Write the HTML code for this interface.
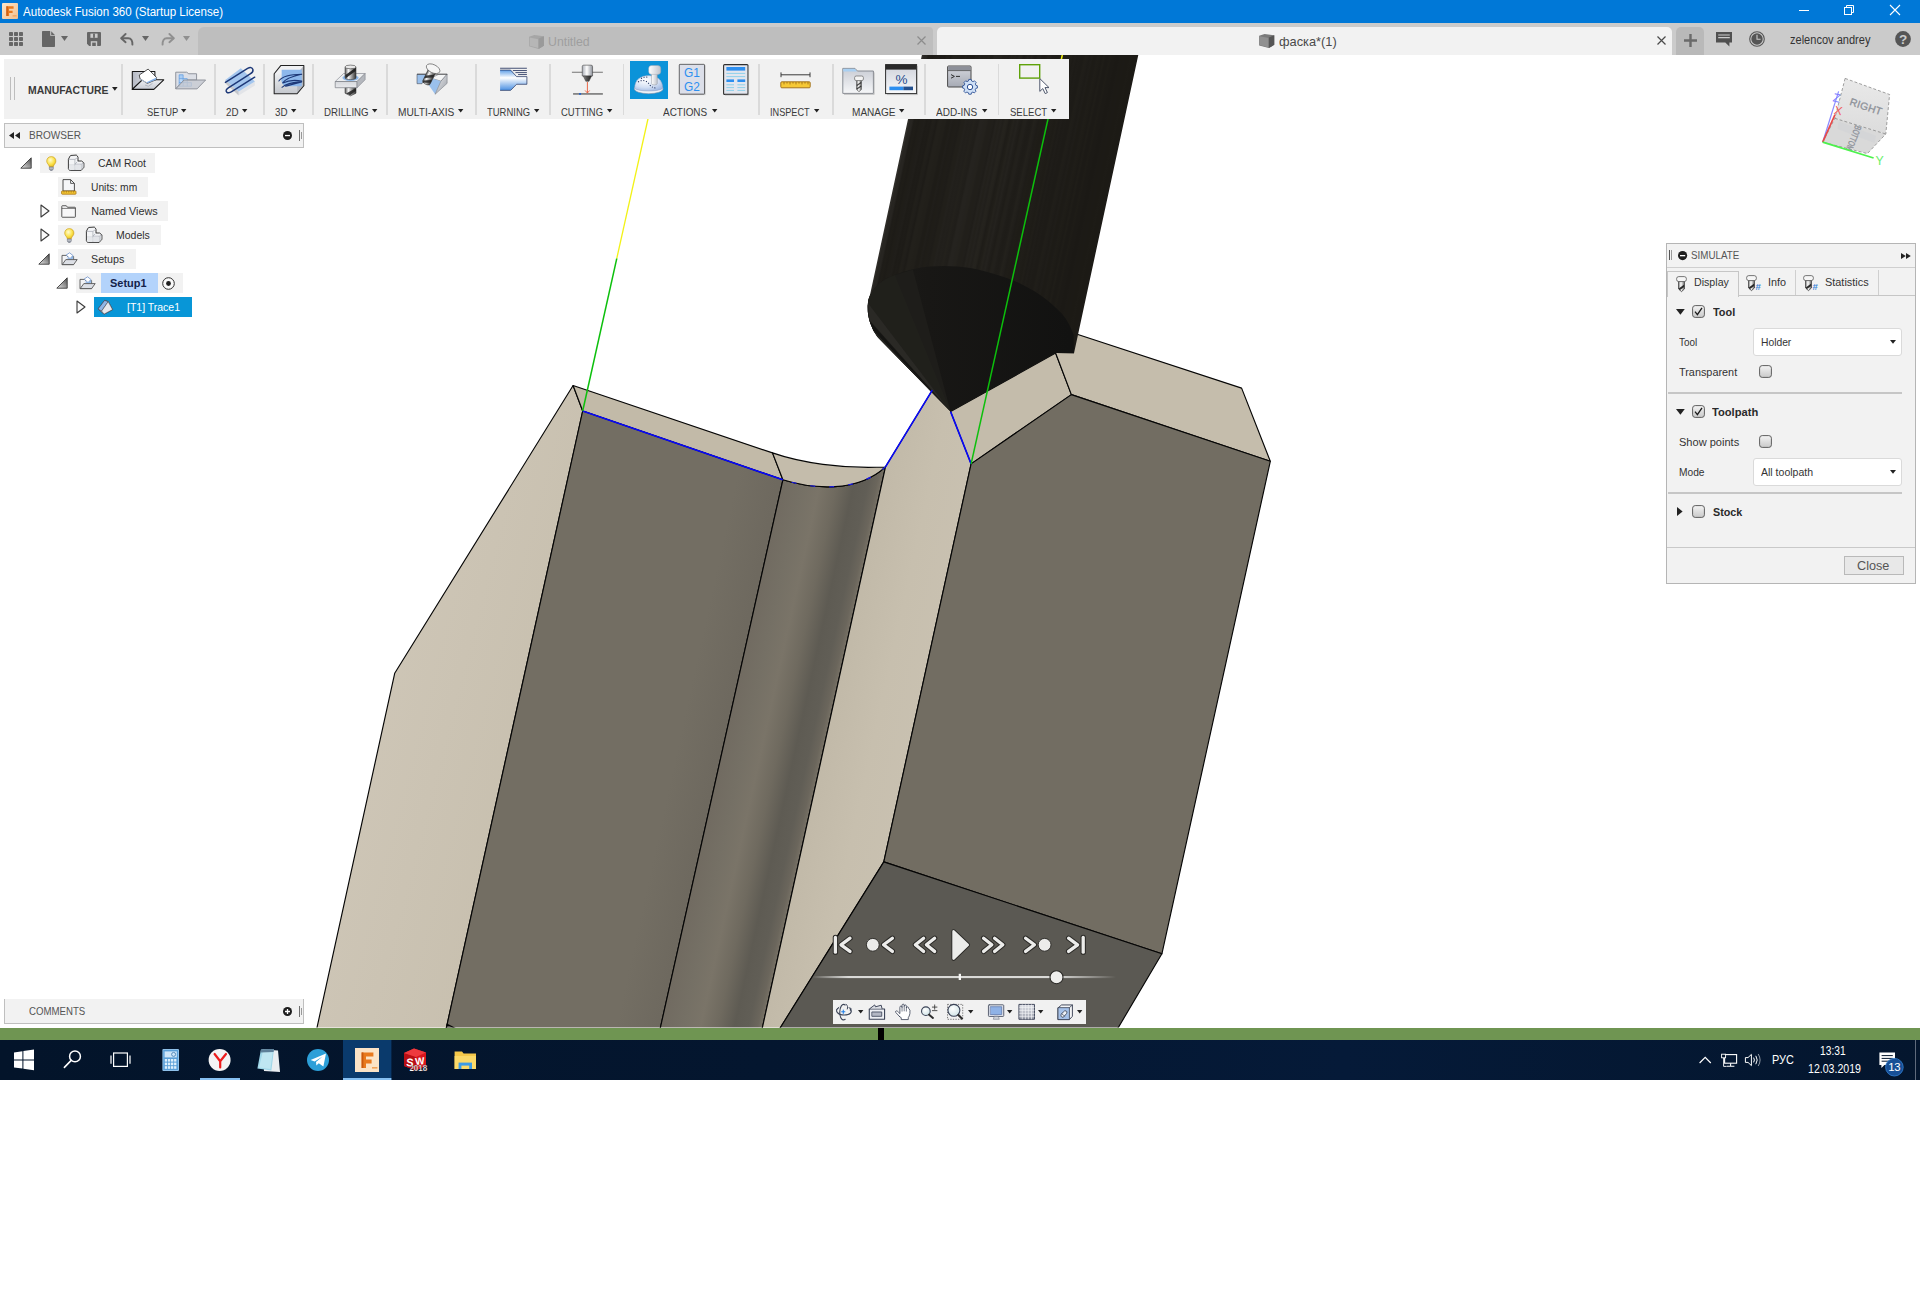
<!DOCTYPE html>
<html lang="en">
<head>
<meta charset="utf-8">
<title>Autodesk Fusion 360 (Startup License)</title>
<style>
*{box-sizing:border-box;margin:0;padding:0}
html,body{width:1920px;height:1291px;overflow:hidden;background:#fff}
body{position:relative;font-family:"Liberation Sans",sans-serif;font-size:11px;color:#333}
.a{position:absolute}
.t{position:absolute;white-space:nowrap}
svg{position:absolute;overflow:visible}
</style>
</head>
<body>
<!-- sec_viewport -->
<svg style="left:0;top:0" width="1920" height="1291" viewBox="0 0 1920 1291"><defs>
<linearGradient id="lgA" gradientUnits="userSpaceOnUse" x1="330" y1="700" x2="560" y2="760"><stop offset="0" stop-color="#cfc7b8"/><stop offset="1" stop-color="#c7bfae"/></linearGradient>
<linearGradient id="lgM" gradientUnits="userSpaceOnUse" x1="830" y1="700" x2="930" y2="722"><stop offset="0" stop-color="#c1b9a8"/><stop offset=".5" stop-color="#c7bfae"/><stop offset="1" stop-color="#c9c1b1"/></linearGradient>
<linearGradient id="lgG" gradientUnits="userSpaceOnUse" x1="782.9" y1="479.8" x2="878" y2="500.7">
<stop offset="0" stop-color="#716b61"/><stop offset=".2" stop-color="#757065"/><stop offset=".38" stop-color="#7a7468"/><stop offset=".55" stop-color="#6f6a5f"/><stop offset=".72" stop-color="#5e5b53"/><stop offset=".86" stop-color="#615e56"/><stop offset=".95" stop-color="#6b665c"/><stop offset="1" stop-color="#787266"/></linearGradient>
<linearGradient id="lgL" gradientUnits="userSpaceOnUse" x1="520" y1="700" x2="720" y2="744"><stop offset="0" stop-color="#736e63"/><stop offset=".8" stop-color="#736e63"/><stop offset="1" stop-color="#6e695f"/></linearGradient>
<linearGradient id="lgT" gradientUnits="userSpaceOnUse" x1="893" y1="180" x2="1110" y2="227.6"><stop offset="0.000" stop-color="#33312d"/><stop offset="0.009" stop-color="#33312d"/><stop offset="0.018" stop-color="#272521"/><stop offset="0.027" stop-color="#272521"/><stop offset="0.036" stop-color="#1e1c18"/><stop offset="0.045" stop-color="#1f1d18"/><stop offset="0.055" stop-color="#1d1b17"/><stop offset="0.064" stop-color="#1f1d18"/><stop offset="0.073" stop-color="#1f1d19"/><stop offset="0.082" stop-color="#201e1a"/><stop offset="0.091" stop-color="#1d1b17"/><stop offset="0.100" stop-color="#1e1c18"/><stop offset="0.109" stop-color="#1d1b17"/><stop offset="0.118" stop-color="#211f1a"/><stop offset="0.127" stop-color="#201e1a"/><stop offset="0.136" stop-color="#1d1b17"/><stop offset="0.145" stop-color="#22201b"/><stop offset="0.155" stop-color="#22201b"/><stop offset="0.164" stop-color="#211f1a"/><stop offset="0.173" stop-color="#211f1a"/><stop offset="0.182" stop-color="#1e1c18"/><stop offset="0.191" stop-color="#1e1c17"/><stop offset="0.200" stop-color="#201e1a"/><stop offset="0.209" stop-color="#1e1c18"/><stop offset="0.218" stop-color="#1f1d18"/><stop offset="0.227" stop-color="#1f1d19"/><stop offset="0.236" stop-color="#1e1c18"/><stop offset="0.245" stop-color="#211f1a"/><stop offset="0.255" stop-color="#211f1a"/><stop offset="0.264" stop-color="#23211d"/><stop offset="0.273" stop-color="#211f1b"/><stop offset="0.282" stop-color="#22201c"/><stop offset="0.291" stop-color="#211f1b"/><stop offset="0.300" stop-color="#23211c"/><stop offset="0.309" stop-color="#211f1b"/><stop offset="0.318" stop-color="#201e1a"/><stop offset="0.327" stop-color="#25231f"/><stop offset="0.336" stop-color="#25231f"/><stop offset="0.345" stop-color="#24221e"/><stop offset="0.355" stop-color="#24221d"/><stop offset="0.364" stop-color="#211f1b"/><stop offset="0.373" stop-color="#211f1a"/><stop offset="0.382" stop-color="#211f1b"/><stop offset="0.391" stop-color="#1f1d19"/><stop offset="0.400" stop-color="#24221e"/><stop offset="0.409" stop-color="#22201b"/><stop offset="0.418" stop-color="#24221e"/><stop offset="0.427" stop-color="#211f1b"/><stop offset="0.436" stop-color="#25231e"/><stop offset="0.445" stop-color="#24221d"/><stop offset="0.455" stop-color="#1e1c18"/><stop offset="0.464" stop-color="#201e19"/><stop offset="0.473" stop-color="#24221d"/><stop offset="0.482" stop-color="#211f1b"/><stop offset="0.491" stop-color="#24221e"/><stop offset="0.500" stop-color="#201e1a"/><stop offset="0.509" stop-color="#1e1c18"/><stop offset="0.518" stop-color="#22201b"/><stop offset="0.527" stop-color="#22201c"/><stop offset="0.536" stop-color="#1f1d19"/><stop offset="0.545" stop-color="#1e1c18"/><stop offset="0.555" stop-color="#1f1d19"/><stop offset="0.564" stop-color="#23211c"/><stop offset="0.573" stop-color="#211f1b"/><stop offset="0.582" stop-color="#1e1c18"/><stop offset="0.591" stop-color="#1f1d18"/><stop offset="0.600" stop-color="#1e1c17"/><stop offset="0.609" stop-color="#1e1c17"/><stop offset="0.618" stop-color="#211f1a"/><stop offset="0.627" stop-color="#1e1c17"/><stop offset="0.636" stop-color="#201e19"/><stop offset="0.645" stop-color="#1f1d18"/><stop offset="0.655" stop-color="#1e1c17"/><stop offset="0.664" stop-color="#201e19"/><stop offset="0.673" stop-color="#1d1b17"/><stop offset="0.682" stop-color="#1f1d19"/><stop offset="0.691" stop-color="#1d1b17"/><stop offset="0.700" stop-color="#1e1c18"/><stop offset="0.709" stop-color="#1d1b17"/><stop offset="0.718" stop-color="#1d1b17"/><stop offset="0.727" stop-color="#201e19"/><stop offset="0.736" stop-color="#1f1d19"/><stop offset="0.745" stop-color="#1d1b17"/><stop offset="0.755" stop-color="#1f1d19"/><stop offset="0.764" stop-color="#1d1b16"/><stop offset="0.773" stop-color="#1d1b17"/><stop offset="0.782" stop-color="#1f1d18"/><stop offset="0.791" stop-color="#1e1c17"/><stop offset="0.800" stop-color="#1c1a16"/><stop offset="0.809" stop-color="#1f1d18"/><stop offset="0.818" stop-color="#1c1a16"/><stop offset="0.827" stop-color="#1c1a16"/><stop offset="0.836" stop-color="#1e1c17"/><stop offset="0.845" stop-color="#1c1a16"/><stop offset="0.855" stop-color="#1c1a16"/><stop offset="0.864" stop-color="#1b1915"/><stop offset="0.873" stop-color="#1b1915"/><stop offset="0.882" stop-color="#1c1a16"/><stop offset="0.891" stop-color="#1c1a15"/><stop offset="0.900" stop-color="#1c1a16"/><stop offset="0.909" stop-color="#1c1a15"/><stop offset="0.918" stop-color="#1c1a15"/><stop offset="0.927" stop-color="#1d1b16"/><stop offset="0.936" stop-color="#1c1a15"/><stop offset="0.945" stop-color="#1c1a15"/><stop offset="0.955" stop-color="#1c1a16"/><stop offset="0.964" stop-color="#1b1915"/><stop offset="0.973" stop-color="#1b1915"/><stop offset="0.982" stop-color="#1c1a16"/><stop offset="0.991" stop-color="#1c1a16"/><stop offset="1.000" stop-color="#1b1915"/></linearGradient>
<linearGradient id="lgC" gradientUnits="userSpaceOnUse" x1="868" y1="330" x2="1070" y2="330"><stop offset="0" stop-color="#1c1b19"/><stop offset=".3" stop-color="#181715"/><stop offset="1" stop-color="#121211"/></linearGradient>
<clipPath id="vp"><rect x="0" y="55" width="1920" height="972.6"/></clipPath>
</defs>
<g clip-path="url(#vp)">
<polygon points="573.1,385.5 394.7,673.3 315.6,1034.0 445.0,1034.0 582.7,411.0" fill="url(#lgA)" stroke="#050505" stroke-width="1.15" stroke-linejoin="round"/>
<polygon points="573.1,385.5 772.5,452.9 782.9,479.8 582.7,411.0" fill="#c2baa8" stroke="#050505" stroke-width="1.15" stroke-linejoin="round"/>
<polygon points="582.7,411.0 782.9,479.8 659.0,1034.0 445.0,1034.0" fill="url(#lgL)" stroke="#050505" stroke-width="1.15" stroke-linejoin="round"/>
<path d="M782.9,479.8 C 800,485.2 818,487.6 835,486.6 C 856,485.3 873,478.2 885.5,466.8 L760.99514978602,1034.0 L658.9688207374954,1034.0 Z" fill="url(#lgG)" stroke="#050505" stroke-width="1.15" stroke-linejoin="round"/>
<path d="M772.5,452.9 C 800,462.5 842,469.2 885.2,467 L885.5,466.8 C 873,478.2 856,485.3 835,486.6 C 818,487.6 800,485.2 782.9,479.8 Z" fill="#c4bcab" stroke="#050505" stroke-width="1.15" stroke-linejoin="round"/>
<polygon points="885.5,466.8 945.0,369.5 1000.0,380.0 971.1,463.9 883.8,861.9 776.4,1034.0 761.0,1034.0" fill="url(#lgM)" stroke="#050505" stroke-width="1.15" stroke-linejoin="round"/>
<polygon points="950.6,411.6 971.1,463.9 1071.4,394.6 1055.6,353.0" fill="#c4bcab" stroke="#050505" stroke-width="1.15" stroke-linejoin="round"/>
<polygon points="1055.6,353.0 1060.0,330.0 1076.4,334.0 1241.6,388.1 1270.3,461.3 1071.4,394.6" fill="#c5bdac" stroke="#050505" stroke-width="1.15" stroke-linejoin="round"/>
<polygon points="971.1,463.9 1071.4,394.6 1270.3,461.3 1161.9,953.8 883.8,861.9" fill="#726d62" stroke="#050505" stroke-width="1.15" stroke-linejoin="round"/>
<polygon points="883.8,861.9 1161.9,953.8 1114.5,1034.0 776.4,1034.0" fill="#5b5953" stroke="#050505" stroke-width="1.15" stroke-linejoin="round"/>
<polygon points="447.2,1024.2 466.0,1034.0 445.0,1034.0" fill="#5b5953" stroke="#050505" stroke-width="1.15" stroke-linejoin="round"/>
<path d="M921.9,55 L867.7,305.5 Q867.4,316 870.5,323.7 Q873,331 878.1,337.6 L950.6,411.6 L1055.6,353.0 L1074.0,353.2 L1138.3,55 Z" fill="url(#lgT)"/>
<path d="M868.2,300 C 872,288 882,279 894.9,274.9 C 906,270.5 918,267.5 929.7,266.5 C 939,265.7 949,265.8 957.6,266.5 C 967,267.3 977,269 985.5,271.4 C 995,274 1005,277 1013.4,280.4 C 1023,284.5 1033,290 1041.3,295.8 C 1049,301.5 1056,307.5 1062.2,313.9 C 1067,319.5 1071,327 1073.6,334.8 L1074.0,353.2 L1055.6,353.0 L950.6,411.6 L878.1,337.6 Q873,331 870.5,323.7 Q867.4,316 867.7,305.5 Z" fill="url(#lgC)"/>
<path d="M868.2,300 C 872,288 882,279 894.9,274.9 L913,269.6 L950.6,411.6 L878.1,337.6 Q873,331 870.5,323.7 Q867.4,316 867.7,305.5 Z" fill="#1e1d1a"/>
<path d="M868,303 L950.6,411.6 L869.4,320 Z" fill="#2a2925"/><path d="M869.6,321 L950.6,411.6 L873,330 Z" fill="#141412"/><path d="M873,330 L950.6,411.6 L877,336.4 Z" fill="#262521"/>
<path d="M868.2,300 C 872,288 882,279 894.9,274.9 L950.6,411.6 L868,303 Z" fill="#23221e" opacity=".55"/>
<path d="M582.7,411.0 L782.9,479.8" stroke="#0808f8" stroke-width="1.6" fill="none"/>
<path d="M782.9,479.8 C 800,485.2 818,487.6 835,486.6 C 856,485.3 873,478.2 885.5,466.8" stroke="#1a1ae8" stroke-width="1.2" fill="none" stroke-dasharray="5 14" stroke-dashoffset="-9"/>
<path d="M885.5,466.8 L932.3,390.2" stroke="#0808f8" stroke-width="1.6" fill="none"/>
<path d="M950.6,411.6 L971.1,463.9" stroke="#0808f8" stroke-width="1.6" fill="none"/>
<path d="M582.7,411.0 L616.8,258.3" stroke="#0cc00c" stroke-width="1.5" fill="none"/>
<path d="M616.8,258.3 L652.2,100" stroke="#f2f216" stroke-width="1.3" fill="none"/>
<path d="M971.1,463.9 L1061.4,59" stroke="#0cc00c" stroke-width="1.5" fill="none"/>
<path d="M1061.3,59.5 L1062.3,55" stroke="#f2f216" stroke-width="1.5" fill="none"/>
</g>
</svg>
<!-- sec_top -->
<div class="a" style="left:0px;top:0px;width:1920px;height:23px;background:#0078d7;"></div>
<svg style="left:2px;top:3px" width="16" height="16" viewBox="0 0 16 16" ><defs><linearGradient id="fg" x1="0" y1="0" x2="1" y2="1"><stop offset="0" stop-color="#fbe6cb"/><stop offset="1" stop-color="#f2c08e"/></linearGradient></defs>
<rect width="16" height="16" rx="1" fill="url(#fg)"/>
<path d="M4.4 13V3.2h7.2v2.5H7.1v2.1h3.5v2.3H7.1V13z" fill="#e8791d"/><path d="M4.4 13V3.2h1.3V13z" fill="#c9580e"/><rect x="10.6" y="12.2" width="4" height="1.3" fill="#f0a35a"/></svg>
<div class="t" style="left:23.00px;top:5.54px;font-size:12px;line-height:12px;color:#fff;transform:scaleX(0.9641);transform-origin:0 0;">Autodesk Fusion 360 (Startup License)</div>
<svg style="left:1799px;top:10px" width="10" height="1" viewBox="0 0 10 1" ><rect width="10" height="1" fill="#fff"/></svg>
<svg style="left:1844px;top:5px" width="10" height="10" viewBox="0 0 10 10" fill="none" stroke="#fff" stroke-width="1"><rect x=".5" y="2.5" width="7" height="7"/><path d="M2.5 2.5V.5H9.5V7.5H7.5"/></svg>
<svg style="left:1890px;top:5px" width="10" height="10" viewBox="0 0 10 10" fill="none" stroke="#fff" stroke-width="1.1"><path d="M0 0L10 10M10 0L0 10"/></svg>
<div class="a" style="left:0px;top:23px;width:1920px;height:32px;background:#cbcbcb;"></div>
<svg style="left:9px;top:32px" width="14" height="14" viewBox="0 0 14 14" fill="#666"><rect x="0" y="0" width="4" height="4" rx=".7"/><rect x="0" y="5" width="4" height="4" rx=".7"/><rect x="0" y="10" width="4" height="4" rx=".7"/><rect x="5" y="0" width="4" height="4" rx=".7"/><rect x="5" y="5" width="4" height="4" rx=".7"/><rect x="5" y="10" width="4" height="4" rx=".7"/><rect x="10" y="0" width="4" height="4" rx=".7"/><rect x="10" y="5" width="4" height="4" rx=".7"/><rect x="10" y="10" width="4" height="4" rx=".7"/></svg>
<svg style="left:42px;top:31px" width="13" height="16" viewBox="0 0 13 16" ><path d="M.8 0H8.2V4.8H13V15.2a.8.8 0 0 1-.8.8H.8a.8.8 0 0 1-.8-.8V.8A.8.8 0 0 1 .8 0z" fill="#666"/><path d="M9.2 .2L12.9 3.9H9.2z" fill="#666"/></svg>
<svg style="left:61px;top:36px" width="7" height="5" viewBox="0 0 7 5" ><path d="M0 0H7L3.5 5z" fill="#666"/></svg>
<svg style="left:87px;top:32px" width="14" height="14" viewBox="0 0 14 14" ><path d="M1 0H13a1 1 0 0 1 1 1V13a1 1 0 0 1-1 1H2.2L0 11.8V1a1 1 0 0 1 1-1z" fill="#666"/><rect x="3.4" y="1.6" width="7.2" height="4.2" fill="#cbcbcb"/><rect x="6.1" y="1.6" width="1.8" height="4.2" fill="#666"/><rect x="3.8" y="9.2" width="6.4" height="4.8" fill="#cbcbcb"/><rect x="5.2" y="10.6" width="3.6" height="3.4" fill="#666"/></svg>
<svg style="left:120px;top:33px" width="14" height="13" viewBox="0 0 14 13" fill="none" stroke="#666" stroke-width="1.9" stroke-linecap="round" stroke-linejoin="round"><path d="M5.6 1L1.2 5.2L5.6 9.2"/><path d="M1.6 5.2H8.2C11.2 5.2 12.6 7.6 12.4 11.6"/></svg>
<svg style="left:142px;top:36px" width="7" height="5" viewBox="0 0 7 5" ><path d="M0 0H7L3.5 5z" fill="#666"/></svg>
<svg style="left:161px;top:33px" width="14" height="13" viewBox="0 0 14 13" fill="none" stroke="#909090" stroke-width="1.9" stroke-linecap="round" stroke-linejoin="round"><path d="M8.4 1L12.8 5.2L8.4 9.2"/><path d="M12.4 5.2H5.8C2.8 5.2 1.4 7.6 1.6 11.6"/></svg>
<svg style="left:183px;top:36px" width="7" height="5" viewBox="0 0 7 5" ><path d="M0 0H7L3.5 5z" fill="#909090"/></svg>
<div class="a" style="left:198px;top:27px;width:735px;height:28px;background:#bebebe;border-radius:6px 4px 0 0"></div>
<svg style="left:528px;top:33.6px" width="17" height="16" viewBox="0 0 16 15" ><path d="M1 2.5L6 1L15 2.2V11L10 14L1 11.5z" fill="#a6a6a6"/><path d="M1.6 3.2L9.6 4.8V13.2L1.6 11z" fill="#b6b6b6"/><path d="M10 4.2L15 2.2V11L10 14z" fill="#9a9a9a"/></svg>
<div class="t" style="left:548.30px;top:35.30px;font-size:13px;line-height:13px;color:#9e9e9e;transform:scaleX(0.9460);transform-origin:0 0;">Untitled</div>
<svg style="left:917px;top:36px" width="9" height="9" viewBox="0 0 9 9" fill="none" stroke="#8c8c8c" stroke-width="1.2"><path d="M.5 .5L8.5 8.5M8.5 .5L.5 8.5"/></svg>
<div class="a" style="left:937px;top:27px;width:735px;height:28px;background:#f2f2f2;border-radius:5px 5px 0 0"></div>
<svg style="left:1258px;top:33.2px" width="17.4" height="16.2" viewBox="0 0 16 15" ><path d="M1 2.5L6 1L15 2.2V11L10 14L1 11.5z" fill="#7a7a7a"/><path d="M1.5 3.1L9.7 4.7V13.4L1.5 11.1z" fill="#909090"/><path d="M10 4.2L15 2.2V11L10 14z" fill="#555"/></svg>
<div class="t" style="left:1279.00px;top:35.30px;font-size:13px;line-height:13px;color:#4a4a4a;transform:scaleX(0.9850);transform-origin:0 0;">фаска*(1)</div>
<svg style="left:1657px;top:36px" width="9" height="9" viewBox="0 0 9 9" fill="none" stroke="#4a4a4a" stroke-width="1.2"><path d="M.5 .5L8.5 8.5M8.5 .5L.5 8.5"/></svg>
<div class="a" style="left:1676px;top:27px;width:28px;height:28px;background:#b9b9b9;border-radius:5px 5px 0 0"></div>
<svg style="left:1684px;top:34px" width="13" height="13" viewBox="0 0 13 13" fill="none" stroke="#6a6a6a" stroke-width="2.4"><path d="M6.5 0V13M0 6.5H13"/></svg>
<svg style="left:1716px;top:32px" width="16" height="15" viewBox="0 0 16 15" ><path d="M0 0H16V10.5H13.4V14.6L9.3 10.5H0z" fill="#505050"/><path d="M2.2 3H13.8M2.2 5.6H13.8" stroke="#cbcbcb" stroke-width="1.1"/></svg>
<svg style="left:1749px;top:31px" width="16" height="16" viewBox="0 0 16 16" ><circle cx="8" cy="8" r="7.3" fill="none" stroke="#555" stroke-width="1.1"/><circle cx="8" cy="8" r="5.7" fill="#555"/><path d="M8 3.8V8.3H11.6" fill="none" stroke="#cbcbcb" stroke-width="1.1"/></svg>
<div class="t" style="left:1789.60px;top:34.04px;font-size:12px;line-height:12px;color:#333;transform:scaleX(0.9200);transform-origin:0 0;">zelencov andrey</div>
<svg style="left:1895px;top:31px" width="16" height="16" viewBox="0 0 16 16" ><circle cx="8" cy="8" r="7.9" fill="#555"/><text x="8" y="12.8" font-family="Liberation Sans, sans-serif" font-weight="bold" font-size="13.5" fill="#cbcbcb" text-anchor="middle">?</text></svg>
<!-- sec_toolbar -->
<div class="a" style="left:4px;top:59px;width:1065px;height:59.5px;background:#f1f1f1;"></div>
<div class="a" style="left:10px;top:77px;width:1px;height:23px;background:#bdbdbd;"></div>
<div class="a" style="left:14px;top:77px;width:1px;height:23px;background:#bdbdbd;"></div>
<div class="t" style="left:27.50px;top:84.76px;font-size:10.8px;line-height:10.8px;color:#3a3a3a;font-weight:bold;transform:scaleX(0.9653);transform-origin:0 0;">MANUFACTURE</div>
<svg style="left:111.5px;top:87px" width="5.6" height="3.8" viewBox="0 0 5.6 3.8" ><path d="M0 0H5.6L2.8 3.8z" fill="#222"/></svg>
<div class="a" style="left:121.4px;top:64px;width:1.5px;height:50.5px;background:#dadada;"></div>
<div class="a" style="left:214.4px;top:64px;width:1.5px;height:50.5px;background:#dadada;"></div>
<div class="a" style="left:263.4px;top:64px;width:1.5px;height:50.5px;background:#dadada;"></div>
<div class="a" style="left:312.4px;top:64px;width:1.5px;height:50.5px;background:#dadada;"></div>
<div class="a" style="left:386.4px;top:64px;width:1.5px;height:50.5px;background:#dadada;"></div>
<div class="a" style="left:475.4px;top:64px;width:1.5px;height:50.5px;background:#dadada;"></div>
<div class="a" style="left:549.4px;top:64px;width:1.5px;height:50.5px;background:#dadada;"></div>
<div class="a" style="left:622.9px;top:64px;width:1.5px;height:50.5px;background:#dadada;"></div>
<div class="a" style="left:758.4px;top:64px;width:1.5px;height:50.5px;background:#dadada;"></div>
<div class="a" style="left:832.4px;top:64px;width:1.5px;height:50.5px;background:#dadada;"></div>
<div class="a" style="left:924.4px;top:64px;width:1.5px;height:50.5px;background:#dadada;"></div>
<div class="a" style="left:997.9px;top:64px;width:1.5px;height:50.5px;background:#dadada;"></div>
<div class="t" style="left:146.60px;top:106.73px;font-size:10.6px;line-height:10.6px;color:#3a3a3a;transform:scaleX(0.8828);transform-origin:0 0;">SETUP</div>
<svg style="left:181.4px;top:109.4px" width="5.4" height="3.6" viewBox="0 0 5.4 3.6" ><path d="M0 0H5.4L2.7 3.6z" fill="#222"/></svg>
<div class="t" style="left:226.00px;top:106.73px;font-size:10.6px;line-height:10.6px;color:#3a3a3a;transform:scaleX(0.9225);transform-origin:0 0;">2D</div>
<svg style="left:242.4px;top:109.4px" width="5.4" height="3.6" viewBox="0 0 5.4 3.6" ><path d="M0 0H5.4L2.7 3.6z" fill="#222"/></svg>
<div class="t" style="left:275.20px;top:106.73px;font-size:10.6px;line-height:10.6px;color:#3a3a3a;transform:scaleX(0.9225);transform-origin:0 0;">3D</div>
<svg style="left:291.4px;top:109.4px" width="5.4" height="3.6" viewBox="0 0 5.4 3.6" ><path d="M0 0H5.4L2.7 3.6z" fill="#222"/></svg>
<div class="t" style="left:324.20px;top:106.73px;font-size:10.6px;line-height:10.6px;color:#3a3a3a;transform:scaleX(0.9122);transform-origin:0 0;">DRILLING</div>
<svg style="left:372.4px;top:109.4px" width="5.4" height="3.6" viewBox="0 0 5.4 3.6" ><path d="M0 0H5.4L2.7 3.6z" fill="#222"/></svg>
<div class="t" style="left:398.30px;top:106.73px;font-size:10.6px;line-height:10.6px;color:#3a3a3a;transform:scaleX(0.9608);transform-origin:0 0;">MULTI-AXIS</div>
<svg style="left:458.4px;top:109.4px" width="5.4" height="3.6" viewBox="0 0 5.4 3.6" ><path d="M0 0H5.4L2.7 3.6z" fill="#222"/></svg>
<div class="t" style="left:487.20px;top:106.73px;font-size:10.6px;line-height:10.6px;color:#3a3a3a;transform:scaleX(0.8926);transform-origin:0 0;">TURNING</div>
<svg style="left:534.3px;top:109.4px" width="5.4" height="3.6" viewBox="0 0 5.4 3.6" ><path d="M0 0H5.4L2.7 3.6z" fill="#222"/></svg>
<div class="t" style="left:561.30px;top:106.73px;font-size:10.6px;line-height:10.6px;color:#3a3a3a;transform:scaleX(0.8916);transform-origin:0 0;">CUTTING</div>
<svg style="left:607.2px;top:109.4px" width="5.4" height="3.6" viewBox="0 0 5.4 3.6" ><path d="M0 0H5.4L2.7 3.6z" fill="#222"/></svg>
<div class="t" style="left:663.30px;top:106.73px;font-size:10.6px;line-height:10.6px;color:#3a3a3a;transform:scaleX(0.9381);transform-origin:0 0;">ACTIONS</div>
<svg style="left:711.6px;top:109.4px" width="5.4" height="3.6" viewBox="0 0 5.4 3.6" ><path d="M0 0H5.4L2.7 3.6z" fill="#222"/></svg>
<div class="t" style="left:770.30px;top:106.73px;font-size:10.6px;line-height:10.6px;color:#3a3a3a;transform:scaleX(0.8642);transform-origin:0 0;">INSPECT</div>
<svg style="left:814.3px;top:109.4px" width="5.4" height="3.6" viewBox="0 0 5.4 3.6" ><path d="M0 0H5.4L2.7 3.6z" fill="#222"/></svg>
<div class="t" style="left:851.70px;top:106.73px;font-size:10.6px;line-height:10.6px;color:#3a3a3a;transform:scaleX(0.9491);transform-origin:0 0;">MANAGE</div>
<svg style="left:899.3px;top:109.4px" width="5.4" height="3.6" viewBox="0 0 5.4 3.6" ><path d="M0 0H5.4L2.7 3.6z" fill="#222"/></svg>
<div class="t" style="left:936.30px;top:106.73px;font-size:10.6px;line-height:10.6px;color:#3a3a3a;transform:scaleX(0.9454);transform-origin:0 0;">ADD-INS</div>
<svg style="left:981.7px;top:109.4px" width="5.4" height="3.6" viewBox="0 0 5.4 3.6" ><path d="M0 0H5.4L2.7 3.6z" fill="#222"/></svg>
<div class="t" style="left:1010.30px;top:106.73px;font-size:10.6px;line-height:10.6px;color:#3a3a3a;transform:scaleX(0.9021);transform-origin:0 0;">SELECT</div>
<svg style="left:1051.4px;top:109.4px" width="5.4" height="3.6" viewBox="0 0 5.4 3.6" ><path d="M0 0H5.4L2.7 3.6z" fill="#222"/></svg>
<svg style="left:0px;top:0px" width="1920" height="1291" viewBox="0 0 1920 1291" ><defs><linearGradient id="s1" x1="0" y1="0" x2="1" y2="0"><stop offset="0" stop-color="#b4b8c3"/><stop offset="1" stop-color="#f3f4f6"/></linearGradient><linearGradient id="s1f" x1="0" y1="0" x2="0" y2="1"><stop offset="0" stop-color="#eef0f3"/><stop offset="1" stop-color="#c6cad3"/></linearGradient><linearGradient id="c3" x1="0" y1="0" x2="0" y2="1"><stop offset="0" stop-color="#eceef0"/><stop offset="1" stop-color="#c4c7cd"/></linearGradient></defs><g transform="translate(120,55) scale(0.1041667)" stroke-linejoin="round"><path d="M118 158H335V240L215 240L118 330z" fill="url(#s1)" stroke="#161616" stroke-width="10"/><path d="M118 330L215 238H420L325 330z" fill="url(#s1f)" stroke="#161616" stroke-width="10"/><path d="M240 288L272 300L312 272" fill="none" stroke="#aeb3bd" stroke-width="9"/><path d="M185 192L270 135L350 215L345 238L262 272L192 228z" fill="#ffffff" stroke="#161616" stroke-width="7"/><path d="M255 262L350 215L345 238L262 272z" fill="#86b2e8"/><path d="M190 226L255 262L262 272L200 240z" fill="#c9dcf4"/><path d="M535 165H640L660 180H735V240H615L535 325z" fill="#dcdfe6" stroke="#8b8f98" stroke-width="9"/><rect x="568" y="190" width="36" height="36" fill="#a9cdf4"/><rect x="568" y="228" width="36" height="36" fill="#bcd8f6"/><rect x="608" y="228" width="36" height="36" fill="#bcd8f6"/><rect x="568" y="266" width="36" height="34" fill="#cfe2f8"/><rect x="608" y="266" width="36" height="34" fill="#cfe2f8"/><rect x="648" y="266" width="36" height="34" fill="#cfe2f8"/><path d="M568 190V300M606 190V300M646 228V300M686 266V300M568 190H606M568 227H646M568 265H686M568 300H686" fill="none" stroke="#5b9ae2" stroke-width="7"/><path d="M535 325L615 240H822L740 325z" fill="#c3c7d0" fill-opacity=".82" stroke="#8b8f98" stroke-width="9"/><path d="M1010 240L1140 350V388L1010 272z" fill="#c3c6cc"/><path d="M1140 350L1295 255V292L1140 388z" fill="#e2e4e8"/><path d="M1010 240L1160 128L1295 255L1140 350z" fill="#a4c6ee"/><path d="M1012 262L1225 128Q1265 108 1276 140Q1282 162 1250 182L1040 315Q1008 336 1024 356Q1044 372 1076 350L1293 213" fill="none" stroke="#1d3878" stroke-width="14" stroke-linecap="round"/><path d="M1480 180L1545 100H1765L1700 180z" fill="#f0f1f3"/><path d="M1700 180L1765 100V295L1700 372z" fill="#b4b7be"/><path d="M1480 180H1700V372H1480z" fill="url(#c3)"/><path d="M1552 142H1745V300H1610C1560 300 1540 250 1552 210z" fill="#8db8ec"/><path d="M1480 180L1545 100H1765V295L1700 372H1480z" fill="none" stroke="#222" stroke-width="10"/><path d="M1525 250C1560 200 1660 185 1745 185C1680 200 1600 215 1562 268C1610 245 1690 240 1745 250M1555 310C1580 285 1660 262 1745 258C1690 272 1620 290 1590 300" fill="none" stroke="#1d3878" stroke-width="10" stroke-linecap="round"/></g></svg>
<svg style="left:0px;top:0px" width="1920" height="1291" viewBox="0 0 1920 1291" ><defs><linearGradient id="dr" x1="0" y1="0" x2="1" y2="0"><stop offset="0" stop-color="#555"/><stop offset=".3" stop-color="#f6f6f6"/><stop offset=".62" stop-color="#9a9a9a"/><stop offset="1" stop-color="#333"/></linearGradient><linearGradient id="drs" x1="0" y1="0" x2="0" y2="1"><stop offset="0" stop-color="#d6d8dc"/><stop offset="1" stop-color="#e8e9ec"/></linearGradient><linearGradient id="mar" x1="0" y1="0" x2="1" y2="1"><stop offset="0" stop-color="#f2f3f5"/><stop offset="1" stop-color="#979ba3"/></linearGradient></defs><g transform="translate(325,60) scale(0.0729167)" stroke-linejoin="round"><path d="M275 375H425V455L350 492L275 455z" fill="url(#dr)" stroke="#3a3a3a" stroke-width="8"/><path d="M290 460L425 385V420L345 485z" fill="#222" opacity=".85"/><path d="M140 295L255 185H550L440 295z" fill="#eceef0" stroke="#85888f" stroke-width="9"/><path d="M140 295H440V380H140z" fill="url(#drs)" stroke="#74777e" stroke-width="9"/><path d="M440 295L550 185V270L440 380z" fill="#b4b7bd" stroke="#85888f" stroke-width="9"/><ellipse cx="350" cy="245" rx="112" ry="42" fill="#8db8ea"/><path d="M275 95V250C290 275 410 275 425 250V95z" fill="url(#dr)" stroke="#3a3a3a" stroke-width="8"/><path d="M280 205L420 105V150L285 250z" fill="#1e1e1e" opacity=".9"/><ellipse cx="350" cy="95" rx="75" ry="25" fill="#e9e9e9" stroke="#3a3a3a" stroke-width="8"/><path d="M1262 195H1400L1330 325H1262z" fill="#9ac0ec" stroke="#4a4e58" stroke-width="8"/><path d="M1480 235L1560 195H1675L1590 290L1470 255z" fill="#f4f5f6" stroke="#4a4e58" stroke-width="7"/><path d="M1470 255L1590 290L1510 470L1420 340z" fill="#9ac0ec"/><path d="M1590 290L1675 195V320L1510 470z" fill="url(#mar)" stroke="#6c7078" stroke-width="7"/><path d="M1262 195H1675" stroke="#333" stroke-width="9"/><g transform="rotate(26 1478 125)"><path d="M1425 150H1535V330C1520 362 1440 362 1425 330z" fill="url(#dr)" stroke="#333" stroke-width="8"/><path d="M1428 245L1532 185V225L1428 285zM1428 325L1532 265V305L1440 352z" fill="#222" opacity=".85"/><ellipse cx="1480" cy="118" rx="100" ry="56" fill="#f5f5f5" stroke="#4a4a4a" stroke-width="8"/></g></g></svg>
<div class="a" style="left:630px;top:61px;width:38px;height:38px;background:#0b93d9;"></div>
<svg style="left:0px;top:0px" width="1920" height="1291" viewBox="0 0 1920 1291" ><defs><linearGradient id="tu" x1="0" y1="0" x2="0" y2="1"><stop offset="0" stop-color="#5f9fe8"/><stop offset=".38" stop-color="#ffffff"/><stop offset="1" stop-color="#4a8fe2"/></linearGradient><linearGradient id="cu" x1="0" y1="0" x2="1" y2="0"><stop offset="0" stop-color="#a9adb6"/><stop offset=".45" stop-color="#ffffff"/><stop offset="1" stop-color="#8e929b"/></linearGradient><linearGradient id="cuc" x1="0" y1="0" x2="1" y2="0"><stop offset="0" stop-color="#8a8a8a"/><stop offset=".4" stop-color="#555"/><stop offset="1" stop-color="#222"/></linearGradient><radialGradient id="sd" cx=".38" cy=".3" r=".85"><stop offset="0" stop-color="#ffffff"/><stop offset=".55" stop-color="#d4e0f4"/><stop offset="1" stop-color="#93addc"/></radialGradient><linearGradient id="sk" x1="0" y1="0" x2="1" y2="0"><stop offset="0" stop-color="#ffffff"/><stop offset="1" stop-color="#bfc3cc"/></linearGradient></defs><g transform="translate(490,60) scale(0.1145833)" stroke-linejoin="round"><path d="M88 88H180L232 145H322V212H232L180 265H88z" fill="url(#tu)"/><path d="M88 88H180L232 145H322V212H232L180 265H88" fill="none" stroke="#1b2a58" stroke-width="6"/><path d="M88 72H322M200 92H322M222 110H322M245 127H322" stroke="#1b2a58" stroke-width="7"/><path d="M715 107H985" stroke="#2a2a2a" stroke-width="5.5"/><path d="M805 58Q805 45 818 45H882Q895 45 895 58V140H805z" fill="url(#cu)" stroke="#3c3c3c" stroke-width="5"/><path d="M814 140H886L864 186H836z" fill="url(#cuc)" stroke="#333" stroke-width="4"/><path d="M850 192V284" stroke="#e8380f" stroke-width="6.5"/><path d="M830 266L850 288L870 266" fill="none" stroke="#e8380f" stroke-width="6"/><path d="M725 296H985" stroke="#777" stroke-width="14"/><rect x="777" y="289" width="18" height="14" fill="#1a5fd0"/><ellipse cx="1385" cy="252" rx="126" ry="42" fill="#eef1f7" stroke="#8690a6" stroke-width="5"/><path d="M1262 248C1262 170 1320 136 1385 136S1508 170 1508 248C1470 278 1300 278 1262 248z" fill="url(#sd)" stroke="#93a0bc" stroke-width="4"/><path d="M1292 192C1330 168 1366 180 1388 208C1404 232 1420 244 1456 244M1318 162C1340 148 1362 146 1384 152" fill="none" stroke="#1b2a58" stroke-width="9" stroke-dasharray="9 15"/><path d="M1410 112H1460V205Q1460 218 1435 218T1410 205z" fill="url(#sk)" stroke="#8b8f98" stroke-width="4"/><rect x="1385" y="48" width="105" height="78" rx="26" fill="url(#sk)" stroke="#a0a4ae" stroke-width="4"/><path d="M1660 302H1878V46" fill="none" stroke="#9a9a9a" stroke-width="8" opacity=".55"/><rect x="1652" y="38" width="220" height="260" rx="6" fill="#dcdfe9" stroke="#2a2a2a" stroke-width="6"/><text x="1762" y="152" font-family="Liberation Sans, sans-serif" font-size="104" fill="#2d8ff0" text-anchor="middle">G1</text><text x="1762" y="268" font-family="Liberation Sans, sans-serif" font-size="104" fill="#2d8ff0" text-anchor="middle">G2</text></g></svg>
<svg style="left:723px;top:64px" width="26" height="31" viewBox="0 0 26 31" ><rect x=".6" y=".6" width="24.4" height="29.8" rx="1" fill="#e3e6ee" stroke="#2e2e2e" stroke-width="1.1"/><path d="M25.6 2V31H2" fill="none" stroke="#9b9b9b" stroke-width="1" opacity=".6"/>
<rect x="3.4" y="3" width="18.8" height="3.6" fill="#2d8ff0"/><path d="M3.4 9.4H22.2M3.4 12.6H22.2" stroke="#8fd0ea" stroke-width="1"/>
<rect x="3.4" y="15.4" width="7.6" height="2.6" fill="#2d8ff0"/><rect x="14.4" y="15.4" width="7.8" height="2.6" fill="#2d8ff0"/>
<path d="M3.4 20.8H11M14.4 20.8H22.2M3.4 23.6H11M14.4 23.6H22.2M3.4 26.4H11M14.4 26.4H22.2" stroke="#8fd0ea" stroke-width="1"/></svg>
<svg style="left:780px;top:71px" width="31" height="18" viewBox="0 0 31 18" ><path d="M1 3.8H30M1 1.4V6.2M30 1.4V6.2" stroke="#3a3a3a" stroke-width="1"/>
<rect x=".8" y="10.8" width="29.4" height="6" rx="1" fill="#f6c835" stroke="#9c6a12" stroke-width=".9"/>
<path d="M4 11V13.4M7 11V12.6M10 11V13.4M13 11V12.6M16 11V13.4M19 11V12.6M22 11V13.4M25 11V12.6M28 11V13.4" stroke="#8a5a10" stroke-width=".7"/></svg>
<svg style="left:842px;top:67px" width="33" height="28" viewBox="0 0 33 28" ><defs><linearGradient id="m1" x1="0" y1="0" x2="0" y2="1"><stop offset="0" stop-color="#c9ccd4"/><stop offset="1" stop-color="#f6f7f9"/></linearGradient><linearGradient id="m1t" x1="0" y1="0" x2="1" y2="0"><stop offset="0" stop-color="#777"/><stop offset=".45" stop-color="#fff"/><stop offset="1" stop-color="#555"/></linearGradient></defs>
<path d="M.8 1.4H13L15.4 4H31.4V26.4H.8z" fill="url(#m1)" stroke="#7e828a" stroke-width=".9"/><path d="M1.2 1.8H12.8L15 4.4H1.2z" fill="#a9d0f2"/>
<path d="M32.2 5.4V27.4H2" fill="none" stroke="#9b9b9b" stroke-width="1" opacity=".5"/>
<path d="M14.6 13H19.4V22.4L17 24.8L14.6 22.4z" fill="url(#m1t)" stroke="#444" stroke-width=".6"/><path d="M14.8 18.4L19.2 15.4M14.8 22L19.2 19" stroke="#222" stroke-width="1.2" opacity=".8"/>
<rect x="12.6" y="9" width="8.8" height="4.6" rx="1.6" fill="#f4f4f4" stroke="#666" stroke-width=".7"/></svg>
<svg style="left:885px;top:64px" width="33" height="31" viewBox="0 0 33 31" ><defs><linearGradient id="m2" x1="0" y1="0" x2="0" y2="1"><stop offset="0" stop-color="#cfd2da"/><stop offset="1" stop-color="#f8f9fb"/></linearGradient></defs>
<rect x=".6" y=".6" width="31" height="29" fill="url(#m2)" stroke="#2e2e2e" stroke-width="1"/><rect x=".6" y=".6" width="31" height="5" fill="#2a2a2a"/>
<path d="M32.4 2V30.6H2" fill="none" stroke="#9b9b9b" stroke-width="1" opacity=".5"/>
<text x="16.4" y="19.6" font-family="Liberation Sans, sans-serif" font-size="13.5" fill="#284c8c" text-anchor="middle">%</text>
<rect x="4.4" y="22.6" width="14" height="3.6" fill="#2d8ff0"/><rect x="18.4" y="22.6" width="9.6" height="3.6" fill="#24508e"/></svg>
<svg style="left:947px;top:65px" width="32" height="30" viewBox="0 0 32 30" ><defs><linearGradient id="ad" x1="0" y1="0" x2="0" y2="1"><stop offset="0" stop-color="#d6d8de"/><stop offset="1" stop-color="#a6aab4"/></linearGradient></defs>
<rect x=".6" y="1" width="23.4" height="21" rx="1" fill="url(#ad)" stroke="#4a4a4a" stroke-width="1"/><rect x="1.2" y="1.6" width="22.2" height="3.6" fill="#8d9099"/><path d="M1 5.6H23.6" stroke="#4a4a4a" stroke-width=".8"/>
<path d="M4 9.6L7.4 11.4L4 13.2M9 11.4H13" fill="none" stroke="#2e2e2e" stroke-width="1"/>
<g transform="translate(23 22)"><path d="M-1.4-7.4H1.4L1.9-5.6L3.6-4.8L5.2-5.8L7.2-3.8L6.2-2.2L6.9-.5L8.6 0V2.6L6.8 3L6 4.7L7 6.3L5 8.3L3.4 7.3L1.8 8L1.4 9.8H-1.4L-1.9 8L-3.6 7.3L-5.2 8.3L-7.2 6.3L-6.2 4.7L-6.9 3L-8.6 2.6V0L-6.8-.5L-6-2.2L-7-3.8L-5-5.8L-3.4-4.8L-1.8-5.6z" fill="#cfe0f6" stroke="#2c4f94" stroke-width="1" transform="translate(0 -1.2) scale(.86)"/><circle cx="0" cy="0" r="2.7" fill="#fff" stroke="#2c4f94" stroke-width="1"/></g></svg>
<svg style="left:1019px;top:64px" width="32" height="32" viewBox="0 0 32 32" ><rect x=".7" y=".7" width="20" height="13.4" fill="none" stroke="#5fa20a" stroke-width="1.4"/>
<path d="M20.8 14.6V27.4L23.8 24.6L26.2 29.6L28.4 28.6L26 23.6H30z" fill="#fff" stroke="#4d566b" stroke-width="1" stroke-linejoin="round"/></svg>
<!-- sec_browser -->
<div class="a" style="left:4px;top:123.1px;width:300px;height:24.7px;background:#f2f2f2;border:1px solid #bfbfbf"></div>
<svg style="left:9px;top:131.5px" width="11" height="7" viewBox="0 0 11 7" ><path d="M5 0V7L0 3.5zM11 0V7L6 3.5z" fill="#222"/></svg>
<div class="t" style="left:29.00px;top:130.23px;font-size:10.6px;line-height:10.6px;color:#555;transform:scaleX(0.9494);transform-origin:0 0;">BROWSER</div>
<svg style="left:283px;top:131px" width="9" height="9" viewBox="0 0 9 9" ><circle cx="4.5" cy="4.5" r="4.5" fill="#1e1e1e"/><rect x="2" y="3.9" width="5" height="1.3" fill="#fff"/></svg>
<div class="a" style="left:299.1px;top:130.1px;width:0.9px;height:10.7px;background:#707070;"></div>
<div class="a" style="left:301px;top:132.2px;width:0.9px;height:6.5px;background:#999;"></div>
<svg style="left:20.2px;top:157px" width="12" height="12" viewBox="0 0 12 12" ><defs><linearGradient id="to" x1="0" y1="1" x2="1" y2="0"><stop offset="0" stop-color="#e8e8e8"/><stop offset="1" stop-color="#4a4a4a"/></linearGradient></defs><path d="M.8 11.2L11.2 .8V11.2z" fill="url(#to)" stroke="#3a3a3a" stroke-width=".9" stroke-linejoin="round"/></svg>
<div class="a" style="left:40px;top:153px;width:115px;height:20px;background:#f2f2f2;"></div>
<svg style="left:45.5px;top:155.5px" width="10.6" height="15.2" viewBox="0 0 12 17" ><defs><radialGradient id="bl" cx=".4" cy=".35" r=".7"><stop offset="0" stop-color="#fffbd0"/><stop offset=".6" stop-color="#fbe24a"/><stop offset="1" stop-color="#e3b81e"/></radialGradient></defs>
<path d="M6 .6C2.8 .6 .8 2.9 .8 5.6C.8 7.6 2 8.8 2.9 10C3.5 10.8 3.6 11.4 3.6 12H8.4C8.4 11.4 8.5 10.8 9.1 10C10 8.8 11.2 7.6 11.2 5.6C11.2 2.9 9.2 .6 6 .6z" fill="url(#bl)" stroke="#c79a1a" stroke-width=".7"/>
<path d="M3.8 12.4H8.2V14.6Q8.2 15.2 7.6 15.4L7 16.2H5L4.4 15.4Q3.8 15.2 3.8 14.6z" fill="#9aa0ab" stroke="#5c6270" stroke-width=".6"/><path d="M3.9 13.6H8.1" stroke="#e8eaee" stroke-width=".7"/></svg>
<svg style="left:68.1px;top:155.2px" width="17" height="16" viewBox="0 0 17 16" ><path d="M.4 4.3L2.1 1Q2.4 .5 3 .45L8 .1Q8.6 .1 9 .6L10 2.2V6H13.6L15.9 7.9V12.3L13.2 15.4H2.2Q1.4 15.4 1 14.8L.4 13.7z" fill="#f3f4f6" stroke="#2f2f2f" stroke-width=".95" stroke-linejoin="round"/>
<path d="M.9 4.4H6.9V15M6.9 4.4L9.8 2.4M6.9 9.2H13.2V15M13.2 9.2L15.6 7.9M6.9 9.2L9.6 6.4" fill="none" stroke="#a4a8b0" stroke-width=".7"/>
<path d="M1 10H6.9" stroke="#c4c7cd" stroke-width=".7"/>
<path d="M7.4 9.7H12.8V14.9H7.4z" fill="#e3e5e9"/><path d="M13.6 9.4L15.4 8.4V12.1L13.6 14.4z" fill="#cfd2d8"/><path d="M1.2 10.4H6.5V14.9H1.6z" fill="#e6e8eb"/></svg>
<div class="t" style="left:98.30px;top:157.86px;font-size:10.8px;line-height:10.8px;color:#2f2f2f;transform:scaleX(0.9636);transform-origin:0 0;">CAM Root</div>
<div class="a" style="left:58px;top:177px;width:90px;height:20px;background:#f2f2f2;"></div>
<svg style="left:61px;top:179px" width="16" height="16" viewBox="0 0 16 16" ><path d="M2 .6H9.6L13.4 4.4V12H2z" fill="#f5f6f8" stroke="#3a3a3a" stroke-width=".9" stroke-linejoin="round"/><path d="M9.6 .6V4.4H13.4" fill="none" stroke="#3a3a3a" stroke-width=".8"/>
<rect x=".6" y="12" width="14.4" height="3.2" rx=".6" fill="#f6c835" stroke="#a8740f" stroke-width=".8"/><path d="M3 12.2V13.6M5.4 12.2V13.6M7.8 12.2V13.6M10.2 12.2V13.6M12.6 12.2V13.6" stroke="#8a5a10" stroke-width=".6"/></svg>
<div class="t" style="left:91.30px;top:181.86px;font-size:10.8px;line-height:10.8px;color:#2f2f2f;transform:scaleX(0.9506);transform-origin:0 0;">Units: mm</div>
<svg style="left:40px;top:204px" width="10" height="14" viewBox="0 0 10 14" ><path d="M1 1L9 7L1 13z" fill="#fafafa" stroke="#3a3a3a" stroke-width="1.1" stroke-linejoin="round"/></svg>
<div class="a" style="left:58px;top:201px;width:110px;height:20px;background:#f2f2f2;"></div>
<svg style="left:61px;top:205.2px" width="15.2" height="13.2" viewBox="0 0 16 14" ><path d="M.8 1.4Q.8 .8 1.4 .8H5.6L6.8 2.4H14.6Q15.2 2.4 15.2 3V12.4Q15.2 13 14.6 13H1.4Q.8 13 .8 12.4z" fill="#f7f7f8" stroke="#3a3a3a" stroke-width=".9"/><path d="M.8 3.6H15.2" stroke="#3a3a3a" stroke-width=".7"/></svg>
<div class="t" style="left:91.30px;top:205.86px;font-size:10.8px;line-height:10.8px;color:#2f2f2f;">Named Views</div>
<svg style="left:40px;top:228px" width="10" height="14" viewBox="0 0 10 14" ><path d="M1 1L9 7L1 13z" fill="#fafafa" stroke="#3a3a3a" stroke-width="1.1" stroke-linejoin="round"/></svg>
<div class="a" style="left:58px;top:225px;width:103px;height:20px;background:#f2f2f2;"></div>
<svg style="left:63.5px;top:227.5px" width="10.6" height="15.2" viewBox="0 0 12 17" ><defs><radialGradient id="bl" cx=".4" cy=".35" r=".7"><stop offset="0" stop-color="#fffbd0"/><stop offset=".6" stop-color="#fbe24a"/><stop offset="1" stop-color="#e3b81e"/></radialGradient></defs>
<path d="M6 .6C2.8 .6 .8 2.9 .8 5.6C.8 7.6 2 8.8 2.9 10C3.5 10.8 3.6 11.4 3.6 12H8.4C8.4 11.4 8.5 10.8 9.1 10C10 8.8 11.2 7.6 11.2 5.6C11.2 2.9 9.2 .6 6 .6z" fill="url(#bl)" stroke="#c79a1a" stroke-width=".7"/>
<path d="M3.8 12.4H8.2V14.6Q8.2 15.2 7.6 15.4L7 16.2H5L4.4 15.4Q3.8 15.2 3.8 14.6z" fill="#9aa0ab" stroke="#5c6270" stroke-width=".6"/><path d="M3.9 13.6H8.1" stroke="#e8eaee" stroke-width=".7"/></svg>
<svg style="left:86.2px;top:227.2px" width="17" height="16" viewBox="0 0 17 16" ><path d="M.4 4.3L2.1 1Q2.4 .5 3 .45L8 .1Q8.6 .1 9 .6L10 2.2V6H13.6L15.9 7.9V12.3L13.2 15.4H2.2Q1.4 15.4 1 14.8L.4 13.7z" fill="#f3f4f6" stroke="#2f2f2f" stroke-width=".95" stroke-linejoin="round"/>
<path d="M.9 4.4H6.9V15M6.9 4.4L9.8 2.4M6.9 9.2H13.2V15M13.2 9.2L15.6 7.9M6.9 9.2L9.6 6.4" fill="none" stroke="#a4a8b0" stroke-width=".7"/>
<path d="M1 10H6.9" stroke="#c4c7cd" stroke-width=".7"/>
<path d="M7.4 9.7H12.8V14.9H7.4z" fill="#e3e5e9"/><path d="M13.6 9.4L15.4 8.4V12.1L13.6 14.4z" fill="#cfd2d8"/><path d="M1.2 10.4H6.5V14.9H1.6z" fill="#e6e8eb"/></svg>
<div class="t" style="left:116.20px;top:229.86px;font-size:10.8px;line-height:10.8px;color:#2f2f2f;transform:scaleX(0.9708);transform-origin:0 0;">Models</div>
<svg style="left:38.2px;top:253px" width="12" height="12" viewBox="0 0 12 12" ><defs><linearGradient id="to" x1="0" y1="1" x2="1" y2="0"><stop offset="0" stop-color="#e8e8e8"/><stop offset="1" stop-color="#4a4a4a"/></linearGradient></defs><path d="M.8 11.2L11.2 .8V11.2z" fill="url(#to)" stroke="#3a3a3a" stroke-width=".9" stroke-linejoin="round"/></svg>
<div class="a" style="left:58px;top:249px;width:78px;height:20px;background:#f2f2f2;"></div>
<svg style="left:61px;top:252px" width="17" height="14" viewBox="0 0 17 14" ><path d="M1 3.4H5.4L6.6 4.6H12.6V12.6H1z" fill="#f2f3f5" stroke="#555" stroke-width=".9"/>
<path d="M5.2 3L8.6 .8L12 3.6L9 6.6z" fill="#fff" stroke="#5b84c4" stroke-width=".7"/><path d="M5.4 5.4L9 6.6L12 3.8L12.4 6.2L9 8.6z" fill="#8fb6e6"/>
<path d="M1.2 12.6L4.8 7.6H16.2L12.6 12.6z" fill="#dcdfe5" stroke="#555" stroke-width=".9" stroke-linejoin="round"/></svg>
<div class="t" style="left:91.30px;top:253.86px;font-size:10.8px;line-height:10.8px;color:#2f2f2f;transform:scaleX(0.9904);transform-origin:0 0;">Setups</div>
<svg style="left:56.2px;top:277px" width="12" height="12" viewBox="0 0 12 12" ><defs><linearGradient id="to" x1="0" y1="1" x2="1" y2="0"><stop offset="0" stop-color="#e8e8e8"/><stop offset="1" stop-color="#4a4a4a"/></linearGradient></defs><path d="M.8 11.2L11.2 .8V11.2z" fill="url(#to)" stroke="#3a3a3a" stroke-width=".9" stroke-linejoin="round"/></svg>
<div class="a" style="left:76px;top:273px;width:107px;height:20px;background:#f2f2f2;"></div>
<svg style="left:79px;top:276px" width="17" height="14" viewBox="0 0 17 14" ><path d="M1 3.4H5.4L6.6 4.6H12.6V12.6H1z" fill="#f2f3f5" stroke="#555" stroke-width=".9"/>
<path d="M5.2 3L8.6 .8L12 3.6L9 6.6z" fill="#fff" stroke="#5b84c4" stroke-width=".7"/><path d="M5.4 5.4L9 6.6L12 3.8L12.4 6.2L9 8.6z" fill="#8fb6e6"/>
<path d="M1.2 12.6L4.8 7.6H16.2L12.6 12.6z" fill="#dcdfe5" stroke="#555" stroke-width=".9" stroke-linejoin="round"/></svg>
<div class="a" style="left:101px;top:273px;width:57px;height:20px;background:#b3d3fb;"></div>
<div class="t" style="left:110.00px;top:277.86px;font-size:10.8px;line-height:10.8px;color:#14224a;font-weight:bold;transform:scaleX(1.0137);transform-origin:0 0;">Setup1</div>
<svg style="left:162px;top:276.5px" width="13" height="13" viewBox="0 0 13 13" ><circle cx="6.5" cy="6.5" r="5.8" fill="#fafafa" stroke="#2e2e2e" stroke-width="1"/><circle cx="6.5" cy="6.5" r="2.4" fill="#1e1e1e"/></svg>
<svg style="left:76px;top:300px" width="10" height="14" viewBox="0 0 10 14" ><path d="M1 1L9 7L1 13z" fill="#fafafa" stroke="#3a3a3a" stroke-width="1.1" stroke-linejoin="round"/></svg>
<div class="a" style="left:94px;top:297px;width:98px;height:20px;background:#0896d7;"></div>
<svg style="left:97px;top:299px" width="17" height="16" viewBox="0 0 17 16" ><path d="M1 10L7.6 1.4L11.2 2.6L15.6 10.6L7 15.2z" fill="#cfd3da" stroke="#3d4350" stroke-width=".8" stroke-linejoin="round"/>
<path d="M1 10L7.6 1.4L11.2 2.6L4.6 12z" fill="#8fb6e6" stroke="#3d4350" stroke-width=".6"/><path d="M4.6 12L11.2 2.6L15.6 10.6L7 15.2z" fill="#e6e8ec" stroke="#3d4350" stroke-width=".6"/></svg>
<div class="t" style="left:127.30px;top:301.86px;font-size:10.8px;line-height:10.8px;color:#fff;transform:scaleX(0.9703);transform-origin:0 0;">[T1] Trace1</div>
<div class="a" style="left:4px;top:999.1px;width:300px;height:24.7px;background:#f2f2f2;border:1px solid #bfbfbf;border-top:0"></div>
<div class="t" style="left:29.30px;top:1006.23px;font-size:10.6px;line-height:10.6px;color:#555;transform:scaleX(0.9106);transform-origin:0 0;">COMMENTS</div>
<svg style="left:283px;top:1006.5px" width="9" height="9" viewBox="0 0 9 9" ><circle cx="4.5" cy="4.5" r="4.5" fill="#1e1e1e"/><path d="M2 4.5H7M4.5 2V7" stroke="#fff" stroke-width="1.3"/></svg>
<div class="a" style="left:299.1px;top:1006.1px;width:0.9px;height:10.7px;background:#707070;"></div>
<div class="a" style="left:301px;top:1008.2px;width:0.9px;height:6.5px;background:#999;"></div>
<!-- sec_sim -->
<div class="a" style="left:1666px;top:243px;width:250px;height:341px;background:#f2f2f2;border:1px solid #b5b5b5"></div>
<div class="a" style="left:1667px;top:267.3px;width:248px;height:1px;background:#cfcfcf;"></div>
<div class="a" style="left:1668.5px;top:250px;width:1px;height:10px;background:#555;"></div>
<div class="a" style="left:1670.5px;top:250px;width:1px;height:10px;background:#999;"></div>
<svg style="left:1678px;top:250.8px" width="9.2" height="9.2" viewBox="0 0 9.2 9.2" ><circle cx="4.6" cy="4.6" r="4.6" fill="#1e1e1e"/><rect x="2" y="4" width="5.2" height="1.3" fill="#fff"/></svg>
<div class="t" style="left:1691.40px;top:250.03px;font-size:10.6px;line-height:10.6px;color:#555;transform:scaleX(0.9229);transform-origin:0 0;">SIMULATE</div>
<svg style="left:1901px;top:253px" width="10" height="6" viewBox="0 0 10 6" ><path d="M0 0V6L4.8 3zM5 0V6L9.8 3z" fill="#222"/></svg>
<div class="a" style="left:1667px;top:295px;width:248px;height:1.4px;background:#c6c6c6;"></div>
<div class="a" style="left:1667px;top:270.5px;width:71.6px;height:26px;background:#f2f2f2;border:1px solid #c6c6c6;border-bottom:0"></div>
<div class="a" style="left:1795px;top:270px;width:1px;height:25px;background:#cfcfcf;"></div>
<div class="a" style="left:1878px;top:270px;width:1px;height:25px;background:#cfcfcf;"></div>
<svg style="left:1675.6px;top:276.3px" width="17" height="16" viewBox="0 0 17 16" ><defs><linearGradient id="tig" x1="0" y1="0" x2="1" y2="0"><stop offset="0" stop-color="#8a8a8a"/><stop offset=".4" stop-color="#fff"/><stop offset="1" stop-color="#777"/></linearGradient></defs>
<path d="M2.6 5H8.4V13L5.5 15.6L2.6 13z" fill="url(#tig)" stroke="#333" stroke-width=".8"/><path d="M2.8 12.4L8.2 8.4V11L3.6 14.2z" fill="#2a2a2a"/>
<rect x=".6" y=".6" width="9.8" height="5" rx="2.2" fill="#f6f6f6" stroke="#555" stroke-width=".8"/></svg>
<div class="t" style="left:1693.90px;top:276.86px;font-size:10.8px;line-height:10.8px;color:#333;transform:scaleX(0.9856);transform-origin:0 0;">Display</div>
<svg style="left:1746px;top:274.5px" width="17" height="16" viewBox="0 0 17 16" ><defs><linearGradient id="tig" x1="0" y1="0" x2="1" y2="0"><stop offset="0" stop-color="#8a8a8a"/><stop offset=".4" stop-color="#fff"/><stop offset="1" stop-color="#777"/></linearGradient></defs>
<path d="M2.6 5H8.4V13L5.5 15.6L2.6 13z" fill="url(#tig)" stroke="#333" stroke-width=".8"/><path d="M2.8 12.4L8.2 8.4V11L3.6 14.2z" fill="#2a2a2a"/>
<rect x=".6" y=".6" width="9.8" height="5" rx="2.2" fill="#f6f6f6" stroke="#555" stroke-width=".8"/><text x="9.4" y="15.4" font-family="Liberation Sans, sans-serif" font-size="9.6" font-weight="bold" fill="#3c86d8">#</text></svg>
<div class="t" style="left:1768.00px;top:276.86px;font-size:10.8px;line-height:10.8px;color:#333;">Info</div>
<svg style="left:1802.9px;top:274.5px" width="17" height="16" viewBox="0 0 17 16" ><defs><linearGradient id="tig" x1="0" y1="0" x2="1" y2="0"><stop offset="0" stop-color="#8a8a8a"/><stop offset=".4" stop-color="#fff"/><stop offset="1" stop-color="#777"/></linearGradient></defs>
<path d="M2.6 5H8.4V13L5.5 15.6L2.6 13z" fill="url(#tig)" stroke="#333" stroke-width=".8"/><path d="M2.8 12.4L8.2 8.4V11L3.6 14.2z" fill="#2a2a2a"/>
<rect x=".6" y=".6" width="9.8" height="5" rx="2.2" fill="#f6f6f6" stroke="#555" stroke-width=".8"/><text x="9.4" y="15.4" font-family="Liberation Sans, sans-serif" font-size="9.6" font-weight="bold" fill="#3c86d8">#</text></svg>
<div class="t" style="left:1825.20px;top:276.86px;font-size:10.8px;line-height:10.8px;color:#333;transform:scaleX(1.0090);transform-origin:0 0;">Statistics</div>
<svg style="left:1676.2px;top:309px" width="8.8" height="5.8" viewBox="0 0 8.8 5.8" ><path d="M0 0H8.8L4.4 5.8z" fill="#222"/></svg>
<svg style="left:1692.4px;top:305.2px" width="13" height="13" viewBox="0 0 13 13" ><defs><linearGradient id="cbg" x1="0" y1="0" x2="0" y2="1"><stop offset="0" stop-color="#f4f4f4"/><stop offset="1" stop-color="#c9c9c9"/></linearGradient></defs><rect x=".6" y=".6" width="11.8" height="11.8" rx="2.6" fill="url(#cbg)" stroke="#5e5e5e" stroke-width="1"/><path d="M3 6.6L5.4 9.6L10 2.8" fill="none" stroke="#1a1a1a" stroke-width="1.3"/></svg>
<div class="t" style="left:1712.50px;top:306.79px;font-size:11px;line-height:11px;color:#2a2a2a;font-weight:bold;transform:scaleX(0.9912);transform-origin:0 0;">Tool</div>
<div class="t" style="left:1679.00px;top:337.16px;font-size:10.8px;line-height:10.8px;color:#333;transform:scaleX(0.9186);transform-origin:0 0;">Tool</div>
<div class="a" style="left:1753.2px;top:328.4px;width:148.4px;height:27.4px;background:#fff;border:1px solid #dadada;border-radius:3px"></div>
<div class="t" style="left:1761.30px;top:337.16px;font-size:10.8px;line-height:10.8px;color:#333;transform:scaleX(0.9524);transform-origin:0 0;">Holder</div>
<svg style="left:1889.9px;top:340.2px" width="6" height="3.8" viewBox="0 0 6 3.8" ><path d="M0 0H6L3.0 3.8z" fill="#222"/></svg>
<div class="t" style="left:1679.00px;top:366.66px;font-size:10.8px;line-height:10.8px;color:#333;transform:scaleX(1.0064);transform-origin:0 0;">Transparent</div>
<svg style="left:1758.5px;top:365.2px" width="13" height="13" viewBox="0 0 13 13" ><defs><linearGradient id="cbg" x1="0" y1="0" x2="0" y2="1"><stop offset="0" stop-color="#f4f4f4"/><stop offset="1" stop-color="#c9c9c9"/></linearGradient></defs><rect x=".6" y=".6" width="11.8" height="11.8" rx="2.6" fill="url(#cbg)" stroke="#5e5e5e" stroke-width="1"/></svg>
<div class="a" style="left:1668px;top:391.8px;width:234px;height:2.6px;background:#c6c6c6;"></div>
<svg style="left:1676.2px;top:409px" width="8.8" height="5.8" viewBox="0 0 8.8 5.8" ><path d="M0 0H8.8L4.4 5.8z" fill="#222"/></svg>
<svg style="left:1692.4px;top:405.2px" width="13" height="13" viewBox="0 0 13 13" ><defs><linearGradient id="cbg" x1="0" y1="0" x2="0" y2="1"><stop offset="0" stop-color="#f4f4f4"/><stop offset="1" stop-color="#c9c9c9"/></linearGradient></defs><rect x=".6" y=".6" width="11.8" height="11.8" rx="2.6" fill="url(#cbg)" stroke="#5e5e5e" stroke-width="1"/><path d="M3 6.6L5.4 9.6L10 2.8" fill="none" stroke="#1a1a1a" stroke-width="1.3"/></svg>
<div class="t" style="left:1712.20px;top:406.79px;font-size:11px;line-height:11px;color:#2a2a2a;font-weight:bold;transform:scaleX(1.0128);transform-origin:0 0;">Toolpath</div>
<div class="t" style="left:1679.30px;top:437.16px;font-size:10.8px;line-height:10.8px;color:#333;transform:scaleX(1.0232);transform-origin:0 0;">Show points</div>
<svg style="left:1758.5px;top:435.2px" width="13" height="13" viewBox="0 0 13 13" ><defs><linearGradient id="cbg" x1="0" y1="0" x2="0" y2="1"><stop offset="0" stop-color="#f4f4f4"/><stop offset="1" stop-color="#c9c9c9"/></linearGradient></defs><rect x=".6" y=".6" width="11.8" height="11.8" rx="2.6" fill="url(#cbg)" stroke="#5e5e5e" stroke-width="1"/></svg>
<div class="t" style="left:1679.30px;top:466.56px;font-size:10.8px;line-height:10.8px;color:#333;transform:scaleX(0.9439);transform-origin:0 0;">Mode</div>
<div class="a" style="left:1753.2px;top:458.4px;width:148.4px;height:27.4px;background:#fff;border:1px solid #dadada;border-radius:3px"></div>
<div class="t" style="left:1761.30px;top:467.16px;font-size:10.8px;line-height:10.8px;color:#333;transform:scaleX(0.9750);transform-origin:0 0;">All toolpath</div>
<svg style="left:1889.9px;top:470.2px" width="6" height="3.8" viewBox="0 0 6 3.8" ><path d="M0 0H6L3.0 3.8z" fill="#222"/></svg>
<div class="a" style="left:1668px;top:491.8px;width:234px;height:2.6px;background:#c6c6c6;"></div>
<svg style="left:1676.6px;top:507.4px" width="5.6" height="9" viewBox="0 0 5.6 9" ><path d="M0 0V9L5.6 4.5z" fill="#222"/></svg>
<svg style="left:1692.4px;top:505.2px" width="13" height="13" viewBox="0 0 13 13" ><defs><linearGradient id="cbg" x1="0" y1="0" x2="0" y2="1"><stop offset="0" stop-color="#f4f4f4"/><stop offset="1" stop-color="#c9c9c9"/></linearGradient></defs><rect x=".6" y=".6" width="11.8" height="11.8" rx="2.6" fill="url(#cbg)" stroke="#5e5e5e" stroke-width="1"/></svg>
<div class="t" style="left:1713.00px;top:506.79px;font-size:11px;line-height:11px;color:#2a2a2a;font-weight:bold;transform:scaleX(0.9781);transform-origin:0 0;">Stock</div>
<div class="a" style="left:1667px;top:547px;width:248px;height:1px;background:#c9c9c9;"></div>
<div class="a" style="left:1844px;top:556px;width:60px;height:18.6px;background:#e8e8e8;border:1px solid #b9b9b9"></div>
<div class="t" style="left:1857.00px;top:560.14px;font-size:12px;line-height:12px;color:#555;transform:scaleX(1.0561);transform-origin:0 0;">Close</div>
<!-- sec_play -->
<svg style="left:0px;top:0px" width="1920" height="1291" viewBox="0 0 1920 1291" ><path d="M835.4,937.4V952.1999999999999" fill="none" stroke="#2a2926" stroke-width="5.3" stroke-linecap="round" stroke-linejoin="round"/><path d="M835.4,937.4V952.1999999999999" fill="none" stroke="#ececea" stroke-width="3.3" stroke-linecap="round" stroke-linejoin="round"/><path d="M850,938.1999999999999L841,944.8L850,951.4" fill="none" stroke="#2a2926" stroke-width="5.3" stroke-linecap="round" stroke-linejoin="round"/><path d="M850,938.1999999999999L841,944.8L850,951.4" fill="none" stroke="#ececea" stroke-width="3.3" stroke-linecap="round" stroke-linejoin="round"/><circle cx="872.8" cy="944.8" r="6.4" fill="#ececea" stroke="#2a2926" stroke-width=".9"/><path d="M892.4,938.1999999999999L883.6,944.8L892.4,951.4" fill="none" stroke="#2a2926" stroke-width="5.3" stroke-linecap="round" stroke-linejoin="round"/><path d="M892.4,938.1999999999999L883.6,944.8L892.4,951.4" fill="none" stroke="#ececea" stroke-width="3.3" stroke-linecap="round" stroke-linejoin="round"/><path d="M923.6,938.1999999999999L915.4,944.8L923.6,951.4" fill="none" stroke="#2a2926" stroke-width="5.3" stroke-linecap="round" stroke-linejoin="round"/><path d="M923.6,938.1999999999999L915.4,944.8L923.6,951.4" fill="none" stroke="#ececea" stroke-width="3.3" stroke-linecap="round" stroke-linejoin="round"/><path d="M934.6,938.1999999999999L926.4,944.8L934.6,951.4" fill="none" stroke="#2a2926" stroke-width="5.3" stroke-linecap="round" stroke-linejoin="round"/><path d="M934.6,938.1999999999999L926.4,944.8L934.6,951.4" fill="none" stroke="#ececea" stroke-width="3.3" stroke-linecap="round" stroke-linejoin="round"/><path d="M953.6,931.4L967.8,944.9L953.6,958.6Z" fill="#ececea" stroke="#2a2926" stroke-width="4.4" stroke-linejoin="round"/><path d="M953.6,931.4L967.8,944.9L953.6,958.6Z" fill="#ececea" stroke="#ececea" stroke-width="2.6" stroke-linejoin="round"/><path d="M983.6,938.1999999999999L991.8,944.8L983.6,951.4" fill="none" stroke="#2a2926" stroke-width="5.3" stroke-linecap="round" stroke-linejoin="round"/><path d="M983.6,938.1999999999999L991.8,944.8L983.6,951.4" fill="none" stroke="#ececea" stroke-width="3.3" stroke-linecap="round" stroke-linejoin="round"/><path d="M994.6,938.1999999999999L1002.8,944.8L994.6,951.4" fill="none" stroke="#2a2926" stroke-width="5.3" stroke-linecap="round" stroke-linejoin="round"/><path d="M994.6,938.1999999999999L1002.8,944.8L994.6,951.4" fill="none" stroke="#ececea" stroke-width="3.3" stroke-linecap="round" stroke-linejoin="round"/><path d="M1025.6,938.1999999999999L1034.4,944.8L1025.6,951.4" fill="none" stroke="#2a2926" stroke-width="5.3" stroke-linecap="round" stroke-linejoin="round"/><path d="M1025.6,938.1999999999999L1034.4,944.8L1025.6,951.4" fill="none" stroke="#ececea" stroke-width="3.3" stroke-linecap="round" stroke-linejoin="round"/><circle cx="1044.6" cy="944.8" r="6.4" fill="#ececea" stroke="#2a2926" stroke-width=".9"/><path d="M1068.6,938.1999999999999L1077.6,944.8L1068.6,951.4" fill="none" stroke="#2a2926" stroke-width="5.3" stroke-linecap="round" stroke-linejoin="round"/><path d="M1068.6,938.1999999999999L1077.6,944.8L1068.6,951.4" fill="none" stroke="#ececea" stroke-width="3.3" stroke-linecap="round" stroke-linejoin="round"/><path d="M1083.2,937.4V952.1999999999999" fill="none" stroke="#2a2926" stroke-width="5.3" stroke-linecap="round" stroke-linejoin="round"/><path d="M1083.2,937.4V952.1999999999999" fill="none" stroke="#ececea" stroke-width="3.3" stroke-linecap="round" stroke-linejoin="round"/><defs><linearGradient id="slg" x1="0" y1="0" x2="1" y2="0"><stop offset="0" stop-color="#fff" stop-opacity="0"/><stop offset=".12" stop-color="#e8e8e6" stop-opacity=".9"/><stop offset=".8" stop-color="#e8e8e6" stop-opacity=".9"/><stop offset="1" stop-color="#fff" stop-opacity="0"/></linearGradient></defs><rect x="812" y="976" width="304" height="2.1" fill="url(#slg)"/><rect x="958.7" y="973.8" width="2.3" height="6.2" fill="#f6f6f4"/><circle cx="1056.5" cy="977.3" r="6.5" fill="#eeeeec" stroke="#2a2926" stroke-width="1.1"/></svg>
<div class="a" style="left:832.7px;top:1000px;width:253.6px;height:24.4px;background:#f1f1f1;"></div>
<svg style="left:0px;top:0px" width="1920" height="1291" viewBox="0 0 1920 1291" ><defs><linearGradient id="ngr" x1="0" y1="0" x2="0" y2="1"><stop offset="0" stop-color="#dfe1e8"/><stop offset="1" stop-color="#9a9eaa"/></linearGradient><radialGradient id="nlens" cx=".4" cy=".35" r=".7"><stop offset="0" stop-color="#ffffff"/><stop offset="1" stop-color="#cfe3e6"/></radialGradient></defs><g transform="translate(830,996) scale(0.135417)" stroke-linejoin="round" stroke-linecap="round" fill="none"><path d="M112 66C90 52 72 80 72 120S90 188 112 172" stroke="#3a4256" stroke-width="8"/><path d="M118 60C132 70 132 86 128 96" stroke="#3a4256" stroke-width="7"/><path d="M62 88C30 110 60 140 105 140S170 118 148 94" stroke="#3a4256" stroke-width="8"/><path d="M66 84L48 100M140 86L156 92L150 108" stroke="#3a4256" stroke-width="6"/><path d="M86 116H110M98 104V128" stroke="#1f7fe8" stroke-width="8"/><path d="M290 96H403V172H290z" fill="#eef0f4" stroke="#3a4256" stroke-width="8"/><rect x="312" y="118" width="70" height="32" fill="#b4b8c4" stroke="#3a4256" stroke-width="6"/><path d="M296 92L330 66L336 80L378 68L384 92" stroke="#3a4256" stroke-width="7" fill="#dfe2e8"/><path d="M512 150L486 122Q480 112 490 110Q498 110 506 120L516 130V84Q516 74 524 74T532 84V70Q532 60 540 60T548 70V76Q548 66 556 66T564 76V88Q564 80 572 80T580 90Q596 100 590 130Q586 150 578 160V174H526V160Q518 158 512 150z" fill="#fff" stroke="#3a4256" stroke-width="6"/><path d="M532 84V112M548 76V110M564 88V112" stroke="#3a4256" stroke-width="5"/><circle cx="708" cy="112" r="32" fill="url(#nlens)" stroke="#3a4256" stroke-width="8"/><path d="M732 138L760 162" stroke="#2e2e2e" stroke-width="15"/><path d="M756 82H790M773 66V98M756 108H790" stroke="#2e2e2e" stroke-width="6"/><rect x="868" y="62" width="112" height="110" stroke="#444" stroke-width="5" stroke-dasharray="10 9" stroke-linecap="butt"/><circle cx="915" cy="106" r="44" fill="url(#nlens)" stroke="#3a4256" stroke-width="8"/><path d="M948 140L974 166" stroke="#2e2e2e" stroke-width="16"/><rect x="1170" y="65" width="113" height="86" rx="6" fill="#e4e7ee" stroke="#555c6c" stroke-width="7"/><rect x="1186" y="79" width="82" height="58" fill="#8fb2e6" stroke="#3c5a94" stroke-width="4"/><path d="M1212 152L1206 172H1250L1244 152z" fill="#d0d3da" stroke="#6a7080" stroke-width="4"/><rect x="1398" y="62" width="112" height="110" fill="url(#ngr)" stroke="#3a4256" stroke-width="7"/><path d="M1420 62V172M1443 62V172M1465 62V172M1488 62V172M1398 84H1510M1398 106H1510M1398 128H1510M1398 150H1510" stroke="#f2f3f6" stroke-width="5" stroke-linecap="butt"/><path d="M1686 86L1710 66H1790V150L1768 174H1686z" fill="#f4f5f7" stroke="#3a4256" stroke-width="7"/><path d="M1686 86H1768V174H1686z" fill="#a6c2ea" stroke="#3a4256" stroke-width="6"/><path d="M1768 86L1790 66" stroke="#3a4256" stroke-width="6"/><path d="M1706 138Q1700 150 1712 156Q1722 160 1730 150L1748 128Q1754 116 1744 110Q1732 106 1724 116z" fill="#eef1f6" stroke="#3a4256" stroke-width="6"/><path d="M1712 132L1734 150" stroke="#3a4256" stroke-width="5"/></g></svg>
<svg style="left:857.5px;top:1010.2px" width="5.4" height="3.6" viewBox="0 0 5.4 3.6" ><path d="M0 0H5.4L2.7 3.6z" fill="#222"/></svg>
<svg style="left:968.4px;top:1010.2px" width="5.4" height="3.6" viewBox="0 0 5.4 3.6" ><path d="M0 0H5.4L2.7 3.6z" fill="#222"/></svg>
<svg style="left:1006.7px;top:1010.2px" width="5.4" height="3.6" viewBox="0 0 5.4 3.6" ><path d="M0 0H5.4L2.7 3.6z" fill="#222"/></svg>
<svg style="left:1037.5px;top:1010.2px" width="5.4" height="3.6" viewBox="0 0 5.4 3.6" ><path d="M0 0H5.4L2.7 3.6z" fill="#222"/></svg>
<svg style="left:1076.7px;top:1010.2px" width="5.4" height="3.6" viewBox="0 0 5.4 3.6" ><path d="M0 0H5.4L2.7 3.6z" fill="#222"/></svg>
<!-- sec_bottom -->
<svg style="left:0px;top:0px" width="1920" height="1291" viewBox="0 0 1920 1291" ><defs><linearGradient id="vc1" x1="0" y1="0" x2="0" y2="1"><stop offset="0" stop-color="#e9e9e9"/><stop offset="1" stop-color="#dcdcdc"/></linearGradient></defs><polygon points="1845.1,78.4 1889.6,94.5 1885.8,134.0 1834.8,118.3" fill="url(#vc1)"/><polygon points="1834.8,118.3 1885.8,134.0 1867.4,153.6 1822.7,142.2" fill="#d9d9d9"/><polygon points="1845.1,78.4 1889.6,94.5 1885.8,134.0 1867.4,153.6 1822.7,142.2 1834.8,118.3" fill="none" stroke="#7a7a7a" stroke-width=".7" stroke-dasharray="3 2"/><path d="M1834.8,118.3L1885.8,134.0" stroke="#7a7a7a" stroke-width=".7" stroke-dasharray="3 2"/><path d="M1838.6,121.6L1876,135.8L1874.6,143L1837.6,129z" fill="#cfd2d6" opacity=".55"/><text transform="translate(1849,104.8) rotate(18.5)" font-family="Liberation Sans, sans-serif" font-size="10.4" fill="#8d9199" stroke="#8d9199" stroke-width=".3" letter-spacing=".25">RIGHT</text><text transform="translate(1855.6,124.8) rotate(112) scale(.66,1)" font-family="Liberation Sans, sans-serif" font-size="9.4" fill="#8d9199" stroke="#8d9199" stroke-width=".3">BOTTOM</text><path d="M1822.7,142.2L1838.6,91.4" stroke="#8a8aff" stroke-width="1.2"/><path d="M1822.7,142.2L1835,114.6" stroke="#e64a4a" stroke-width="1.7"/><path d="M1822.7,142.2L1873.6,158" stroke="#4cf24c" stroke-width="1.8"/><text x="1833" y="102" font-family="Liberation Sans, sans-serif" font-size="12" fill="#8080ff" transform="rotate(12 1836 98)">Z</text><text x="1834.4" y="114.6" font-family="Liberation Sans, sans-serif" font-size="12" fill="#f05a5a" transform="rotate(12 1838 110)">X</text><text x="1875.6" y="164.6" font-family="Liberation Sans, sans-serif" font-size="12.4" fill="#6cf06c">Y</text></svg>
<div class="a" style="left:0px;top:1027.6px;width:1920px;height:12.4px;background:#6f9552;"></div>
<div class="a" style="left:878.4px;top:1028px;width:5.6px;height:12px;background:#000;"></div>
<div class="a" style="left:0px;top:1040px;width:1920px;height:40px;background:#04152c;background:linear-gradient(90deg,#03142a 0%,#04162f 40%,#051a38 70%,#04162e 100%)"></div>
<svg style="left:0px;top:0px" width="1920" height="1291" viewBox="0 0 1920 1291" ><g fill="#fff"><path d="M14 1052.4L22.4 1051.2V1059.4H14zM23.4 1051.05L34 1049.6V1059.4H23.4zM14 1060.4H22.4V1068.6L14 1067.4zM23.4 1060.4H34V1070.2L23.4 1068.75z"/></g><circle cx="75" cy="1056.4" r="5.4" fill="none" stroke="#fff" stroke-width="1.5"/><path d="M71.2 1060.4L64.4 1067.4" stroke="#fff" stroke-width="1.6" stroke-linecap="round"/><rect x="113.6" y="1053" width="13.8" height="13.4" fill="none" stroke="#fff" stroke-width="1.2"/><path d="M111 1055.6V1063.8M130 1055.6V1063.8" stroke="#fff" stroke-width="1.2"/><rect x="162.4" y="1049" width="16.6" height="22" rx="1" fill="#8fc1ea"/><rect x="163.4" y="1050" width="14.6" height="20" fill="#5a9fd8"/><rect x="164.6" y="1051.4" width="12.2" height="6" fill="#cfe6f8"/><circle cx="173.6" cy="1054.4" r="2" fill="none" stroke="#3d78b0" stroke-width=".8"/><rect x="164.8" y="1059.0" width="2.3" height="2.6" fill="#dff0fc"/><rect x="167.9" y="1059.0" width="2.3" height="2.6" fill="#dff0fc"/><rect x="171.0" y="1059.0" width="2.3" height="2.6" fill="#dff0fc"/><rect x="174.1" y="1059.0" width="2.3" height="2.6" fill="#dff0fc"/><rect x="164.8" y="1062.6" width="2.3" height="2.6" fill="#dff0fc"/><rect x="167.9" y="1062.6" width="2.3" height="2.6" fill="#dff0fc"/><rect x="171.0" y="1062.6" width="2.3" height="2.6" fill="#dff0fc"/><rect x="174.1" y="1062.6" width="2.3" height="2.6" fill="#dff0fc"/><rect x="164.8" y="1066.2" width="2.3" height="2.6" fill="#dff0fc"/><rect x="167.9" y="1066.2" width="2.3" height="2.6" fill="#dff0fc"/><rect x="171.0" y="1066.2" width="2.3" height="2.6" fill="#dff0fc"/><rect x="174.1" y="1066.2" width="2.3" height="2.6" fill="#dff0fc"/><circle cx="219.6" cy="1060" r="11" fill="#f4f4f4"/><path d="M214.6 1054L220.2 1061.2V1067.4M226 1054L220.2 1061.2" fill="none" stroke="#ee1c1c" stroke-width="2.2" stroke-linecap="round" stroke-linejoin="round"/><path d="M262.4 1049.4L278 1050.6L280 1072L264 1071z" fill="#e9edf1"/><path d="M261 1049.6L274 1049L271.4 1070.4L257.4 1068.4z" fill="#9fd6e8"/><path d="M263 1051L273 1050.6L270.4 1069L259 1067.4z" fill="#bfe6f2"/><path d="M261 1049.6L274 1049L273.6 1052L260.6 1052.6z" fill="#5d7f99"/><circle cx="318" cy="1060" r="11" fill="#2c9fd8"/><path d="M310.6 1060L326 1053.6L323.4 1066.6L318.8 1063.2L316.4 1065.6L316 1062L322.6 1056.4L314.6 1061.4z" fill="#fff"/><rect x="343" y="1040" width="48.4" height="40" fill="#0a3a6c"/><rect x="343" y="1078" width="48.4" height="2" fill="#86c0f2"/><rect x="355" y="1048" width="24" height="24" fill="#fbe3c6"/><path d="M361.6 1068V1052.4H373.4V1056.4H366V1059.6H371.6V1063.4H366V1068z" fill="#e8791d"/><path d="M361.6 1068V1052.4H363.4V1068z" fill="#c9580e"/><rect x="372" y="1067" width="5.4" height="1.6" fill="#f0a35a"/><rect x="200" y="1078" width="40" height="2" fill="#86c0f2"/><path d="M404 1053L414 1048.6L426 1052.4V1066L416 1070.6L404 1066z" fill="#d9161c"/><path d="M404 1053L416 1057V1070.6L404 1066z" fill="#b80f14"/><path d="M404 1053L414 1048.6L426 1052.4L416 1057z" fill="#ee3a3e"/><text x="406" y="1066" font-family="Liberation Sans, sans-serif" font-size="11" font-weight="bold" fill="#fff" transform="rotate(4 406 1066)">S</text><text x="415.4" y="1065" font-family="Liberation Sans, sans-serif" font-size="10" font-weight="bold" fill="#fff" transform="rotate(-6 415 1065)">W</text><text x="409.4" y="1071.4" font-family="Liberation Sans, sans-serif" font-size="9.6" font-weight="bold" fill="#fff" textLength="17.8" lengthAdjust="spacingAndGlyphs" stroke="#3a0a0a" stroke-width=".25">2018</text><path d="M454.6 1051.4H462L463.6 1053.6H476V1069H454.6z" fill="#f5c84a"/><path d="M454.6 1056H476V1069H454.6z" fill="#fbd968"/><rect x="458.6" y="1062.6" width="13.4" height="6.4" fill="#3c9be6"/><rect x="461.4" y="1065.6" width="7.8" height="3.4" fill="#fbd968"/><path d="M1699.6 1063L1705.2 1057.4L1710.8 1063" fill="none" stroke="#fff" stroke-width="1.2"/><rect x="1724.6" y="1054.6" width="12" height="8.6" fill="none" stroke="#fff" stroke-width="1.1"/><path d="M1730.6 1063.2V1066M1726.8 1066.2H1734.4" stroke="#fff" stroke-width="1.1"/><rect x="1721.6" y="1054.2" width="4" height="3.6" fill="#04152c" stroke="#fff" stroke-width=".9"/><path d="M1723.6 1058V1066.4H1726.6" fill="none" stroke="#fff" stroke-width=".9"/><path d="M1745.4 1057.6H1748L1751.4 1054.4V1065.6L1748 1062.4H1745.4z" fill="none" stroke="#fff" stroke-width="1"/><path d="M1753.6 1057.6Q1755.2 1060 1753.6 1062.4" fill="none" stroke="#fff" stroke-width="1"/><path d="M1755.8 1055.8Q1758.6 1060 1755.8 1064.2" fill="none" stroke="#fff" stroke-width="1"/><path d="M1758.2 1054Q1762 1060 1758.2 1066" fill="none" stroke="#8f97a4" stroke-width="1"/><path d="M1879.4 1052.4H1895V1065H1884.4L1881.4 1068V1065H1879.4z" fill="#fff"/><path d="M1881.6 1055.6H1892.8M1881.6 1058.4H1892.8M1881.6 1061.2H1892.8" stroke="#04152c" stroke-width="1"/><circle cx="1894.4" cy="1067.2" r="8.8" fill="#174f96" stroke="#2f78c8" stroke-width=".9"/><text x="1894.2" y="1071.2" font-family="Liberation Sans, sans-serif" font-size="11.4" fill="#fff" text-anchor="middle" letter-spacing="-.5">13</text><rect x="1915" y="1040" width="1" height="40" fill="#5f6a7c"/></svg>
<div class="t" style="left:1772.20px;top:1054.04px;font-size:12px;line-height:12px;color:#fff;transform:scaleX(0.9072);transform-origin:0 0;">РУС</div>
<div class="t" style="left:1820.40px;top:1045.04px;font-size:12px;line-height:12px;color:#fff;transform:scaleX(0.8525);transform-origin:0 0;">13:31</div>
<div class="t" style="left:1808.00px;top:1063.44px;font-size:12px;line-height:12px;color:#fff;transform:scaleX(0.8825);transform-origin:0 0;">12.03.2019</div>
</body>
</html>
